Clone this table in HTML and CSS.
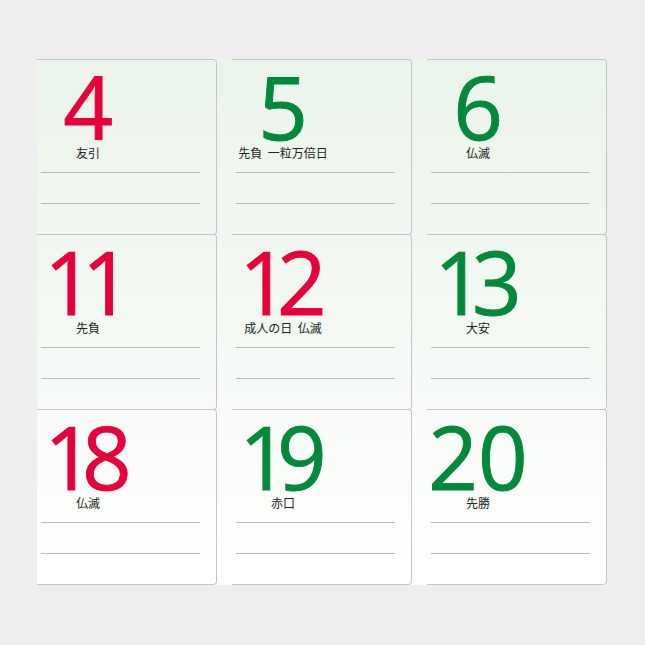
FILE: index.html
```html
<!DOCTYPE html>
<html lang="ja">
<head>
<meta charset="utf-8">
<link rel="stylesheet" href="styles.css">
</head>
<body>
<div class="sheet">
  <div class="cell"><div class="head"><div class="num red">4</div><div class="label">友引</div></div><div class="rule"></div><div class="rule second"></div></div>
  <div class="cell"><div class="head"><div class="num green">5</div><div class="label">先負 一粒万倍日</div></div><div class="rule"></div><div class="rule second"></div></div>
  <div class="cell"><div class="head"><div class="num green">6</div><div class="label">仏滅</div></div><div class="rule"></div><div class="rule second"></div></div>
  <div class="cell"><div class="head"><div class="num red"><span class="one">1</span>1</div><div class="label">先負</div></div><div class="rule"></div><div class="rule second"></div></div>
  <div class="cell"><div class="head"><div class="num red"><span class="one">1</span>2</div><div class="label">成人の日 仏滅</div></div><div class="rule"></div><div class="rule second"></div></div>
  <div class="cell"><div class="head"><div class="num green"><span class="one">1</span>3</div><div class="label">大安</div></div><div class="rule"></div><div class="rule second"></div></div>
  <div class="cell"><div class="head"><div class="num red"><span class="one">1</span>8</div><div class="label">仏滅</div></div><div class="rule"></div><div class="rule second"></div></div>
  <div class="cell"><div class="head"><div class="num green"><span class="one">1</span>9</div><div class="label">赤口</div></div><div class="rule"></div><div class="rule second"></div></div>
  <div class="cell"><div class="head"><div class="num green">20</div><div class="label">先勝</div></div><div class="rule"></div><div class="rule second"></div></div>
</div>
</body>
</html>
```
FILE: styles.css
```css
html, body {
  margin: 0;
  padding: 0;
}
body {
  background: #eeeeee;
  width: 645px;
  height: 645px;
  overflow: hidden;
}
.sheet {
  margin: 59px 0 0 37px;
  width: 570px;
  height: 526px;
  display: grid;
  grid-template-columns: 180px 180px 180px;
  grid-auto-rows: 175px;
  column-gap: 15px;
  background: linear-gradient(to bottom, #ebf4eb 0%, #f2f8f2 45%, #ffffff 100%);
}
.cell {
  box-sizing: border-box;
  height: 176px;
  border: 1px solid #c4c6c4;
  border-left: none;
  border-radius: 0 4px 4px 0;
  padding-top: 13px;
}
.head {
  width: 102px;
  text-align: center;
}
.num {
  font-family: "Open Sans", "Liberation Sans", sans-serif;
  font-size: 87px;
  line-height: 66px;
  height: 66px;
  white-space: nowrap;
  -webkit-text-stroke: 0.9px currentColor;
}
.one {
  letter-spacing: -12px;
}
.red { color: #e5003c; }
.green { color: #00883d; }
.label {
  margin-top: 7px;
  font-family: "Noto Sans CJK JP", sans-serif;
  font-size: 12px;
  font-weight: 400;
  line-height: 14px;
  color: #222222;
  word-spacing: 3px;
  white-space: nowrap;
}
.rule {
  margin: 12px 0 0 4px;
  width: 159px;
  height: 1px;
  background: #b7bcb7;
}
.rule.second {
  margin-top: 30px;
}
```
